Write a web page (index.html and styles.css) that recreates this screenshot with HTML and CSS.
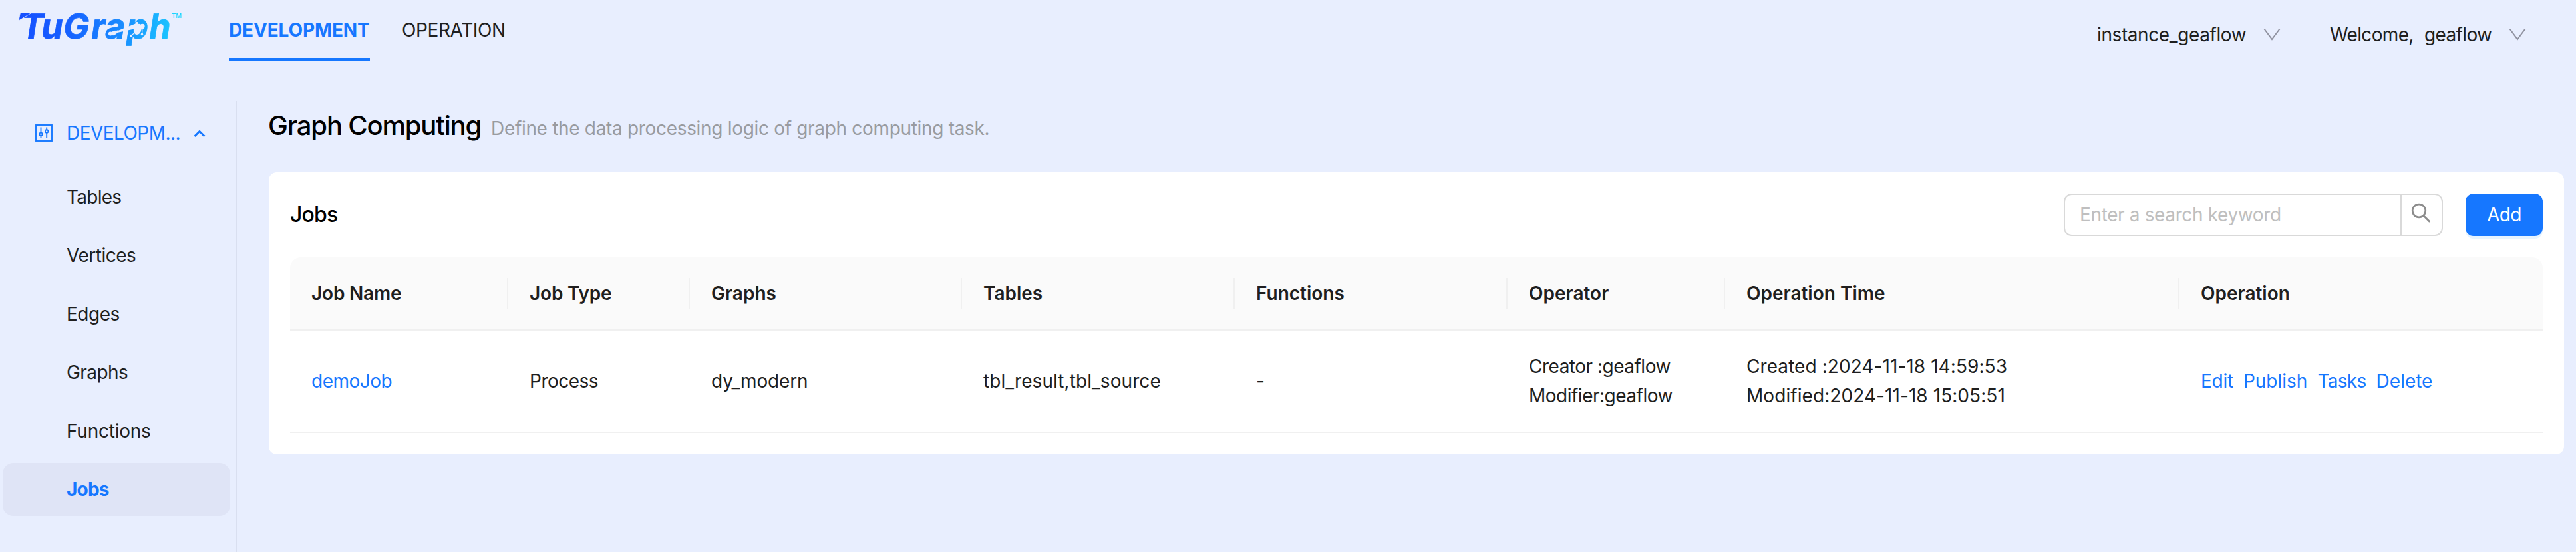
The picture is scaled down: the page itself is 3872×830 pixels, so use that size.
FILE: index.html
```html
<!DOCTYPE html>
<html lang="en">
<head>
<meta charset="utf-8">
<title>TuGraph - Graph Computing</title>
<link rel="stylesheet" href="styles.css">
</head>
<body>
<header class="topbar">
  <svg class="logo" width="260" height="72" viewBox="20 6 260 72" role="img" aria-label="TuGraph">
    <defs>
      <linearGradient id="brand" gradientUnits="userSpaceOnUse" x1="28" y1="0" x2="264" y2="0">
        <stop offset="0" stop-color="#1650ff"/>
        <stop offset="0.3" stop-color="#1660ff"/>
        <stop offset="0.65" stop-color="#188cff"/>
        <stop offset="1" stop-color="#19ccff"/>
      </linearGradient>
    </defs>
    <text class="logo-word" transform="translate(0 58) skewX(-9)" x="29 60 93 135 156 188 222" y="0" fill="url(#brand)" stroke="url(#brand)">TuGraph</text>
    <text class="logo-tm" x="258" y="27">TM</text>
    <path d="M28 31L30.500 19H48Z" fill="#1650ff" stroke="#e8eefe" stroke-width="0.800"/>
    <g stroke="#e8eefe" stroke-width="1.300" fill="#e8eefe">
      <path d="M166 50.500L214 40L205 35M214 40L197 53.500M214 40L213.500 51"/>
      <circle cx="166" cy="50.500" r="2.400"/>
      <circle cx="214" cy="39.500" r="3"/>
      <circle cx="205.500" cy="35" r="1.500"/>
      <circle cx="197" cy="53.500" r="1.200"/>
      <circle cx="213.500" cy="51.500" r="1.200"/>
    </g>
  </svg>
  <nav class="tabs">
    <a class="tab tab-active">DEVELOPMENT</a>
    <a class="tab">OPERATION</a>
  </nav>
  <div class="account">
    <div class="picker picker-instance"><span>instance_geaflow</span><svg width="26" height="18" viewBox="0 0 26 18"><path d="M1.500 0.500L13 16L24.500 0.500"/></svg></div>
    <div class="picker picker-user"><span class="hello">Welcome,</span><span>geaflow</span><svg width="26" height="18" viewBox="0 0 26 18"><path d="M1.500 0.500L13 16L24.500 0.500"/></svg></div>
  </div>
</header>
<div class="body">
  <aside class="sidebar">
    <div class="group">
      <svg class="group-icon" width="26" height="26" viewBox="0 0 26 26"><rect x="1" y="1" width="24" height="24"/><path d="M8.500 4.500V12.500M8.500 17V21M17.200 4.500V8M17.200 13V21"/><circle cx="8.500" cy="14.800" r="2.200"/><circle cx="17.200" cy="10.500" r="2.200"/></svg>
      <span class="group-name">DEVELOPM...</span>
      <svg class="group-arrow" width="18" height="12" viewBox="0 0 18 12"><path d="M1.500 10L9 2.500L16.500 10"/></svg>
    </div>
    <a class="item item-tables">Tables</a>
    <a class="item">Vertices</a>
    <a class="item">Edges</a>
    <a class="item item-graphs">Graphs</a>
    <a class="item item-functions">Functions</a>
    <a class="item item-active">Jobs</a>
  </aside>
  <main class="main">
    <div class="heading">
      <h1 class="title">Graph Computing</h1>
      <span class="subtitle">Define the data processing logic of graph computing task.</span>
    </div>
    <section class="card">
      <div class="card-head">
        <h2 class="card-title">Jobs</h2>
        <div class="search">
          <span class="placeholder">Enter a search keyword</span>
          <span class="search-button"><svg width="30" height="30" viewBox="0 0 30 30"><circle cx="12" cy="12" r="9.800"/><path d="M19 19.500L28.300 28.800"/></svg></span>
        </div>
        <button class="add">Add</button>
      </div>
      <div class="grid grid-head">
        <div class="cell">Job Name</div>
        <div class="cell">Job Type</div>
        <div class="cell">Graphs</div>
        <div class="cell">Tables</div>
        <div class="cell">Functions</div>
        <div class="cell">Operator</div>
        <div class="cell">Operation Time</div>
        <div class="cell">Operation</div>
      </div>
      <div class="grid grid-row">
        <div class="cell tight"><a class="link">demoJob</a></div>
        <div class="cell tight">Process</div>
        <div class="cell">dy_modern</div>
        <div class="cell plain">tbl_result,tbl_source</div>
        <div class="cell">-</div>
        <div class="cell tight">Creator :geaflow<br>Modifier:geaflow</div>
        <div class="cell plain">Created :2024-11-18 14:59:53<br>Modified:2024-11-18 15:05:51</div>
        <div class="cell actions"><a class="link link-edit">Edit</a><a class="link">Publish</a><a class="link link-tasks">Tasks</a><a class="link">Delete</a></div>
      </div>
    </section>
  </main>
</div>
</body>
</html>
```
FILE: styles.css
```css
* { box-sizing: border-box; }
body {
  margin: 0;
  height: 830px;
  display: flex;
  flex-direction: column;
  overflow: hidden;
  background: #e8eefe;
  color: #1f1f1f;
  font: 28px/44px Inter, "Liberation Sans", sans-serif;
}
svg { display: block; flex: none; fill: none; }

.topbar { height: 152px; flex: none; display: flex; align-items: flex-start; padding: 0 75px 0 20px; }
.logo { margin-top: 6px; overflow: visible; }
.logo-word { font: 700 52px Inter, sans-serif; stroke-width: 0.800; }
.logo-tm { font: 500 9.500px Inter, sans-serif; fill: #19d4ff; }
.tabs { display: flex; gap: 48px; margin-left: 64px; }
.tab { height: 91px; padding-top: 23px; letter-spacing: -0.390px; }
.tab-active { width: 212px; font-weight: 700; letter-spacing: -0.130px; color: #1677ff; border-bottom: 4px solid #1677ff; }
.account { margin-left: auto; display: flex; padding-top: 30px; letter-spacing: -0.400px; }
.picker { display: flex; align-items: center; justify-content: space-between; white-space: nowrap; }
.picker svg { stroke: #9092a0; stroke-width: 2; }
.picker-instance { width: 276px; margin-right: 74px; }
.picker-user { width: 295px; letter-spacing: -0.650px; }
.picker-user svg { margin-left: auto; }
.hello { width: 142px; }

.body { display: flex; flex: 1; }
.sidebar { width: 356px; flex: none; border-right: 2px solid #d9dff0; padding: 8px 8px 0 4px; display: flex; flex-direction: column; gap: 8px; }
.group { display: flex; align-items: center; height: 80px; padding-left: 49px; color: #1677ff; letter-spacing: -0.550px; margin-bottom: 8px; }
.group-icon { stroke: currentColor; stroke-width: 1.900; }
.group-name { width: 191px; margin-left: 21px; }
.group-arrow { stroke: currentColor; stroke-width: 3; margin-top: 2px; }
.item { width: 342px; height: 80px; padding-left: 96px; line-height: 80px; border-radius: 16px; letter-spacing: -0.480px; }
.item-tables { letter-spacing: -0.750px; }
.item-graphs { letter-spacing: -0.550px; }
.item-functions { letter-spacing: -0.240px; }
.item-active { background: #dfe4f6; color: #1677ff; font-weight: 700; letter-spacing: -0.800px; }

.main { flex: 1; min-width: 0; padding: 9px 18px 0 48px; }
.heading { display: flex; align-items: baseline; height: 98px; }
.title { margin: 0 0 0 -1px; width: 335px; font-size: 40px; line-height: 56px; font-weight: 500; letter-spacing: -1.180px; color: #000; white-space: nowrap; }
.subtitle { color: #999ba0; letter-spacing: -0.320px; }
.card { background: #fff; border-radius: 12px; padding: 32px; }
.card-head { display: flex; align-items: center; height: 64px; margin-bottom: 32px; }
.card-title { margin: 0 auto 0 0; font-size: 32px; font-weight: 500; letter-spacing: -0.840px; color: #000; }
.search { display: flex; width: 570px; height: 64px; border: 2px solid #d9d9d9; border-radius: 12px; margin-right: 34px; }
.placeholder { flex: 1; padding-left: 22px; line-height: 60px; color: #bfbfbf; letter-spacing: -0.370px; }
.search-button { width: 62px; border-left: 2px solid #d9d9d9; padding: 12px 0 0 14px; }
.search-button svg { stroke: #8c8c8c; stroke-width: 2.700; }
.add { width: 116px; height: 64px; border: 0; border-radius: 12px; padding: 0; background: #1677ff; color: #fff; font: inherit; letter-spacing: -0.730px; box-shadow: 0 4px 0 rgba(5, 145, 255, 0.1); }

.grid { display: grid; grid-template-columns: 328px 273px 409px 410px 410px 327px 683px 546px; align-items: center; }
.grid-head { height: 110px; background: #fafafa; border-bottom: 2px solid #f0f0f0; border-radius: 16px 16px 0 0; font-weight: 600; }
.grid-row { height: 154px; border-bottom: 2px solid #f0f0f0; }
.cell { padding-left: 32px; letter-spacing: -0.150px; white-space: nowrap; }
.grid-head .cell { height: 46px; line-height: 46px; border-right: 2px solid #f0f0f0; letter-spacing: 0; }
.grid-head .cell:last-child { border-right: 0; }
.grid-head .cell:nth-child(-n+2) { letter-spacing: -0.200px; }
.grid-row .tight { letter-spacing: -0.500px; }
.grid-row .plain { letter-spacing: 0.070px; }
.link { color: #1677ff; }
.actions { display: flex; gap: 15px; }
.grid-row .actions { letter-spacing: 0; }
.link-edit { letter-spacing: -0.250px; }
.link-tasks { letter-spacing: -0.700px; }
```
